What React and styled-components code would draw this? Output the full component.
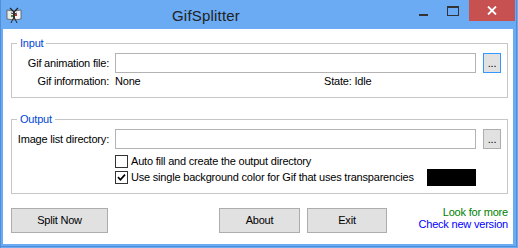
import React from "react";
import styled, { createGlobalStyle } from "styled-components";

const GlobalStyle = createGlobalStyle`
  html, body { margin: 0; padding: 0; background: #ffffff; }
  body { font-family: "Liberation Sans", Arial, sans-serif; }
  * { box-sizing: border-box; }
`;

const Window = styled.div`
  width: 518px;
  height: 248px;
  background: #6aabf3;
  display: flex;
  flex-direction: column;
  box-shadow: inset 1px 0 0 #4f8fd9, inset -1px -1px 0 #6aabf3, inset -2px -2px 0 #4f8fd9;
`;

const TitleBar = styled.div`
  height: 29px;
  display: flex;
  align-items: flex-start;
  flex: none;
`;

const AppIcon = styled.svg`
  margin: 7px 0 0 6px;
  width: 16px;
  height: 16px;
  flex: none;
`;

const Title = styled.div`
  margin: 6px 0 0 150px;
  font-size: 15px;
  line-height: 20px;
  color: #222;
  letter-spacing: 0.2px;
`;

const Captions = styled.div`
  margin-left: auto;
  display: flex;
  padding-right: 3px;
`;

const CaptionButton = styled.div`
  width: ${(p) => p.$w}px;
  height: 21px;
  display: flex;
  align-items: center;
  justify-content: center;
  background: ${(p) => (p.$close ? "#c75050" : "transparent")};
`;

const MinGlyph = styled.div`
  width: 9px;
  height: 2px;
  background: #333;
  margin-top: 8px;
`;

const MaxGlyph = styled.div`
  width: 12px;
  height: 10px;
  border: 1px solid #333;
  border-top-width: 2px;
  margin-top: 1px;
`;

const Client = styled.div`
  flex: 1;
  background: #ffffff;
  margin: 0 5px 4px 3px;
  padding: 14px 5px 0 8px;
  font-size: 11px;
  letter-spacing: -0.2px;
  color: #000;
`;

const Group = styled.div`
  position: relative;
  border: 1px solid #c6c6c6;
  display: grid;
  grid-template-columns: 97px 1fr 19px;
  column-gap: 6px;
  align-items: center;
  padding: 9px 6px ${(p) => p.$padBottom}px 0;
  margin-top: ${(p) => p.$top}px;
`;

const Legend = styled.span`
  position: absolute;
  top: -7px;
  left: 5px;
  padding: 0 3px;
  background: #fff;
  color: #0046d5;
  line-height: 13px;
`;

const Label = styled.div`
  text-align: right;
  line-height: 13px;
  white-space: nowrap;
  margin-top: ${(p) => p.$mt || 0}px;
`;

const TextBox = styled.div`
  height: 20px;
  border: 1px solid #b3b3b3;
  background: #fff;
`;

const Browse = styled.div`
  width: 18px;
  height: 20px;
  justify-self: end;
  background: #e1e1e1;
  border: 1px solid ${(p) => (p.$focused ? "#3399ff" : "#adadad")};
  display: flex;
  align-items: center;
  justify-content: center;
  line-height: 13px;
  padding-top: 1px;
`;

const InfoValue = styled.div`
  grid-column: 2 / 4;
  display: flex;
  line-height: 13px;
  margin-top: ${(p) => p.$mt || 0}px;
  white-space: nowrap;
`;

const NoneText = styled.span`
  width: 209px;
`;

const CheckRow = styled.div`
  grid-column: 2 / 3;
  height: ${(p) => p.$h}px;
  margin-top: ${(p) => p.$mt || 0}px;
  display: flex;
  align-items: center;
  white-space: nowrap;
  line-height: 13px;
`;

const Box = styled.div`
  width: 13px;
  height: 13px;
  border: 1px solid #333;
  background: #fff;
  margin-right: 3px;
  flex: none;
  display: flex;
  align-items: center;
  justify-content: center;
`;

const Swatch = styled.div`
  margin-left: auto;
  width: 49px;
  height: 17px;
  background: #000;
`;

const BottomRow = styled.div`
  display: flex;
  align-items: flex-start;
  margin-top: 14px;
`;

const PushButton = styled.div`
  width: ${(p) => p.$w}px;
  height: 25px;
  margin-left: ${(p) => p.$ml || 0}px;
  background: #e1e1e1;
  border: 1px solid #adadad;
  display: flex;
  align-items: center;
  justify-content: center;
  line-height: 13px;
`;

const Links = styled.div`
  margin-left: auto;
  margin-top: -2px;
  text-align: right;
  line-height: 12px;
`;

const LinkLine = styled.div`
  color: ${(p) => p.$color};
`;

export default function App() {
  return (
    <>
      <GlobalStyle />
      <Window>
        <TitleBar>
          <AppIcon viewBox="0 0 16 16">
            <path d="M1 3 L7.5 4 L7.5 13 L1 12 Z" fill="#e9e9e9" stroke="#555" strokeWidth="0.8" />
            <path d="M15 3 L8.5 4 L8.5 13 L15 12 Z" fill="#f4f4f4" stroke="#555" strokeWidth="0.8" />
            <path d="M4 1 L8 5 L12 1" stroke="#222" strokeWidth="1.2" fill="none" />
            <path d="M8 5 L8 10" stroke="#222" strokeWidth="1.6" />
            <path d="M5 6 L8 7 L11 6" stroke="#3a3a3a" strokeWidth="1" fill="none" />
            <rect x="9" y="7" width="2" height="2" fill="#c03030" />
            <rect x="5" y="8" width="2" height="2" fill="#3a8a3a" />
            <path d="M8 10 L5 16 M8 10 L11 16" stroke="#222" strokeWidth="1" />
          </AppIcon>
          <Title>GifSplitter</Title>
          <Captions>
            <CaptionButton $w={28}>
              <MinGlyph />
            </CaptionButton>
            <CaptionButton $w={32}>
              <MaxGlyph />
            </CaptionButton>
            <CaptionButton $w={46} $close>
              <svg width="10" height="9" viewBox="0 0 10 9">
                <path d="M1 0.5 L9 8.5 M9 0.5 L1 8.5" stroke="#fff" strokeWidth="1.8" />
              </svg>
            </CaptionButton>
          </Captions>
        </TitleBar>
        <Client>
          <Group $padBottom={9} $top={0}>
            <Legend>Input</Legend>
            <Label>Gif animation file:</Label>
            <TextBox />
            <Browse $focused>...</Browse>
            <Label $mt={2}>Gif information:</Label>
            <InfoValue $mt={2}>
              <NoneText>None</NoneText>
              <span>State: Idle</span>
            </InfoValue>
          </Group>
          <Group $padBottom={7} $top={21}>
            <Legend>Output</Legend>
            <Label>Image list directory:</Label>
            <TextBox />
            <Browse>...</Browse>
            <CheckRow $h={16} $mt={4}>
              <Box />
              Auto fill and create the output directory
            </CheckRow>
            <CheckRow $h={17}>
              <Box>
                <svg width="9" height="9" viewBox="0 0 9 9">
                  <path d="M1 4.2 L3.4 6.8 L8 1.6" stroke="#000" strokeWidth="1.7" fill="none" />
                </svg>
              </Box>
              Use single background color for Gif that uses transparencies
              <Swatch />
            </CheckRow>
          </Group>
          <BottomRow>
            <PushButton $w={97}>Split Now</PushButton>
            <PushButton $w={81} $ml={111}>About</PushButton>
            <PushButton $w={80} $ml={7}>Exit</PushButton>
            <Links>
              <LinkLine $color="#008000">Look for more</LinkLine>
              <LinkLine $color="#0000ff">Check new version</LinkLine>
            </Links>
          </BottomRow>
        </Client>
      </Window>
    </>
  );
}
